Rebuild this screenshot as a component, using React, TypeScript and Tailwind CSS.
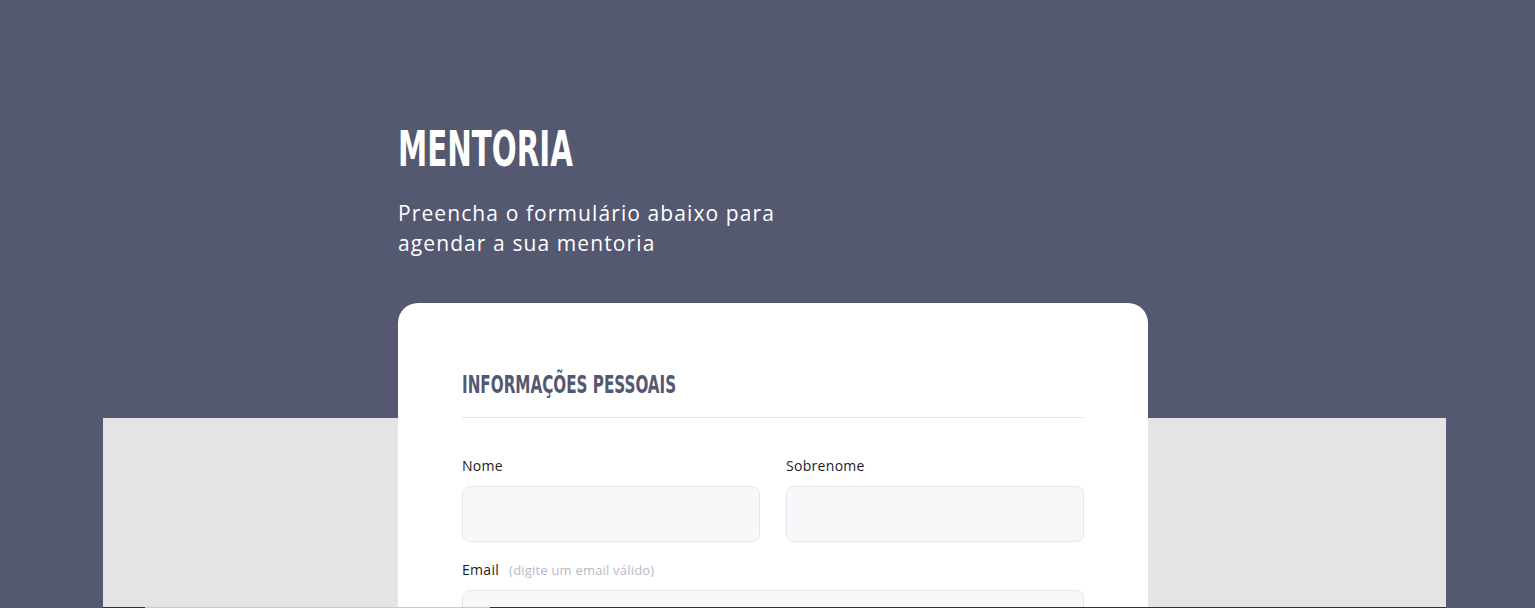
const headFont = { fontFamily: '"DejaVu Sans Condensed", "Liberation Sans", sans-serif' };

function Field({ label, hint, className }: { label: string; hint?: string; className?: string }) {
  return (
    <div className={className}>
      <label className="flex items-baseline gap-2.5 text-[14px] leading-5 tracking-[0.3px] text-[#1c1c1c]">
        {label}
        {hint && <span className="text-[13px] tracking-[0.2px] text-[#b9b9c9]">{hint}</span>}
      </label>
      <input
        type="text"
        className="mt-2.5 block h-14 w-full rounded-lg border border-[#e6e6f0] bg-[#f8f8fb] px-4 outline-none"
      />
    </div>
  );
}

export default function App() {
  return (
    <div className="min-h-screen bg-[#545871] font-['Open_Sans',sans-serif]">
      {/* Hero */}
      <div className="h-[418px] pl-[398px] pt-[125px]">
        <h1
          style={headFont}
          className="origin-left scale-x-[0.665] whitespace-nowrap text-[49px] font-bold leading-none text-white"
        >
          MENTORIA
        </h1>
        <p className="mt-[24px] max-w-[420px] text-[21px] leading-[30px] tracking-[1.1px] text-white">
          Preencha o formulário abaixo para agendar a sua mentoria
        </p>
      </div>

      {/* Form area */}
      <div className="ml-[103px] mr-[89px] flow-root min-h-[600px] bg-[#e4e4e4]">
        <div className="-mt-[115px] ml-[295px] w-[750px] rounded-[20px] bg-white px-16 pb-16 pt-[69px]">
          <div className="border-b border-[#e6e6e6] pb-[20px]">
            <h2
              style={headFont}
              className="origin-left scale-x-[0.675] whitespace-nowrap text-[25px] font-bold leading-none text-[#545871]"
            >
              INFORMAÇÕES PESSOAIS
            </h2>
          </div>

          <div className="mt-[38px] grid grid-cols-2 gap-x-[26px]">
            <Field label="Nome" />
            <Field label="Sobrenome" />
          </div>
          <Field label="Email" hint="(digite um email válido)" className="mt-[18px]" />
        </div>
      </div>

      {/* bottom bar peeking in */}
      <div className="fixed bottom-0 left-[103px] right-[89px] flex h-px">
        <div className="w-[42px] bg-[#2a2f3a]" />
        <div className="w-[345px] bg-[#c9c9c9]" />
        <div className="flex-1 bg-[#2a2f3a]" />
      </div>
    </div>
  );
}
